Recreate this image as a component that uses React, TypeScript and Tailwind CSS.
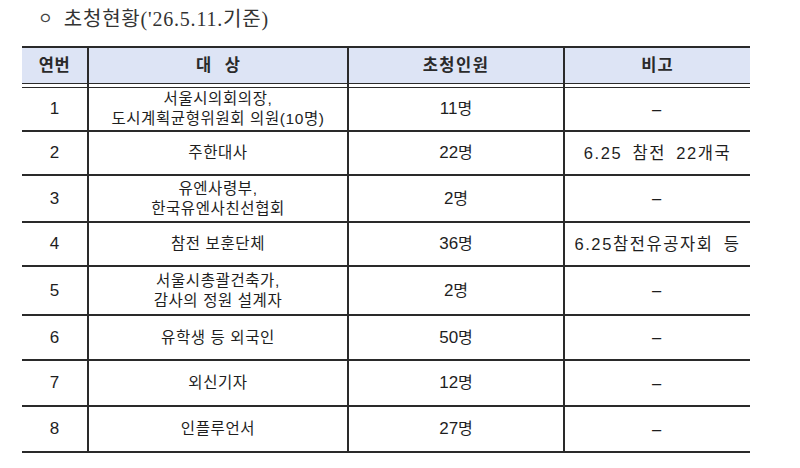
import React from "react";

const rows: { no: string; target: string[]; count: string; note: string; h: string }[] = [
  { no: "1", target: ["서울시의회의장,", "도시계획균형위원회 의원(10명)"], count: "11", note: "–", h: "h-[44px]" },
  { no: "2", target: ["주한대사"], count: "22", note: "6.25 참전 22개국", h: "h-[44px]" },
  { no: "3", target: ["유엔사령부,", "한국유엔사친선협회"], count: "2", note: "–", h: "h-[47px]" },
  { no: "4", target: ["참전 보훈단체"], count: "36", note: "6.25참전유공자회 등", h: "h-[44px]" },
  { no: "5", target: ["서울시총괄건축가,", "감사의 정원 설계자"], count: "2", note: "–", h: "h-[49px]" },
  { no: "6", target: ["유학생 등 외국인"], count: "50", note: "–", h: "h-[45px]" },
  { no: "7", target: ["외신기자"], count: "12", note: "–", h: "h-[46px]" },
  { no: "8", target: ["인플루언서"], count: "27", note: "–", h: "h-[46px]" },
];

const grid = "grid grid-cols-[65px_260px_216px_187px]";
const vline = "border-l-2 border-[#2a2a2a]";

export default function App() {
  return (
    <div
      className="w-[800px] h-[468px] bg-white text-[#1e1e1e] overflow-hidden"
      style={{ fontFamily: '"Liberation Sans", "Noto Sans CJK KR", sans-serif' }}
    >
      <div className="flex items-center h-[36px] pl-[38px] pt-[1px]">
        <span className="text-[16px] text-[#444] mr-[11px] leading-none">ㅇ</span>
        <span
          className="text-[20px] text-[#333] leading-none tracking-[0.8px]"
          style={{ fontFamily: '"Liberation Serif", "Noto Sans CJK KR", serif' }}
        >
          초청현황(&#39;26.5.11.기준)
        </span>
      </div>
      <div className="ml-[22px] w-[728px] mt-[10px]">
        <div className={`${grid} h-[37px] border-t-2 border-[#2a2a2a] bg-[#dde4f5] font-bold text-[16.5px] text-[#2a2a2a]`}>
          <div className="flex items-center justify-center tracking-[0.5px]">연번</div>
          <div className={`${vline} flex items-center justify-center`}>대&nbsp;&nbsp;&nbsp;상</div>
          <div className={`${vline} flex items-center justify-center tracking-[1.5px]`}>초청인원</div>
          <div className={`${vline} flex items-center justify-center tracking-[1px]`}>비고</div>
        </div>
        <div className={`${grid} h-[5px]`}>
          <div className="border-y-[1.5px] border-[#2a2a2a]" />
          <div className={`${vline} border-y-[1.5px] border-y-[#2a2a2a]`} />
          <div className={`${vline} border-y-[1.5px] border-y-[#2a2a2a]`} />
          <div className={`${vline} border-y-[1.5px] border-y-[#2a2a2a]`} />
        </div>
        {rows.map((r) => (
          <div key={r.no} className={`${grid} ${r.h} border-b-2 border-[#2a2a2a] text-[15.5px]`}>
            <div className="flex items-center justify-center text-[17px]">{r.no}</div>
            <div className={`${vline} flex flex-col items-center justify-center leading-[20px] tracking-[0.6px]`}>
              {r.target.map((t) => (
                <span key={t}>{t}</span>
              ))}
            </div>
            <div className={`${vline} flex items-center justify-center`}>
              <span className="text-[17px]">{r.count}</span>
              <span className="text-[16px]">명</span>
            </div>
            <div className={`${vline} flex items-center justify-center text-[16.5px] tracking-[1.6px] [word-spacing:4px] whitespace-nowrap`}>
              {r.note}
            </div>
          </div>
        ))}
      </div>
    </div>
  );
}
